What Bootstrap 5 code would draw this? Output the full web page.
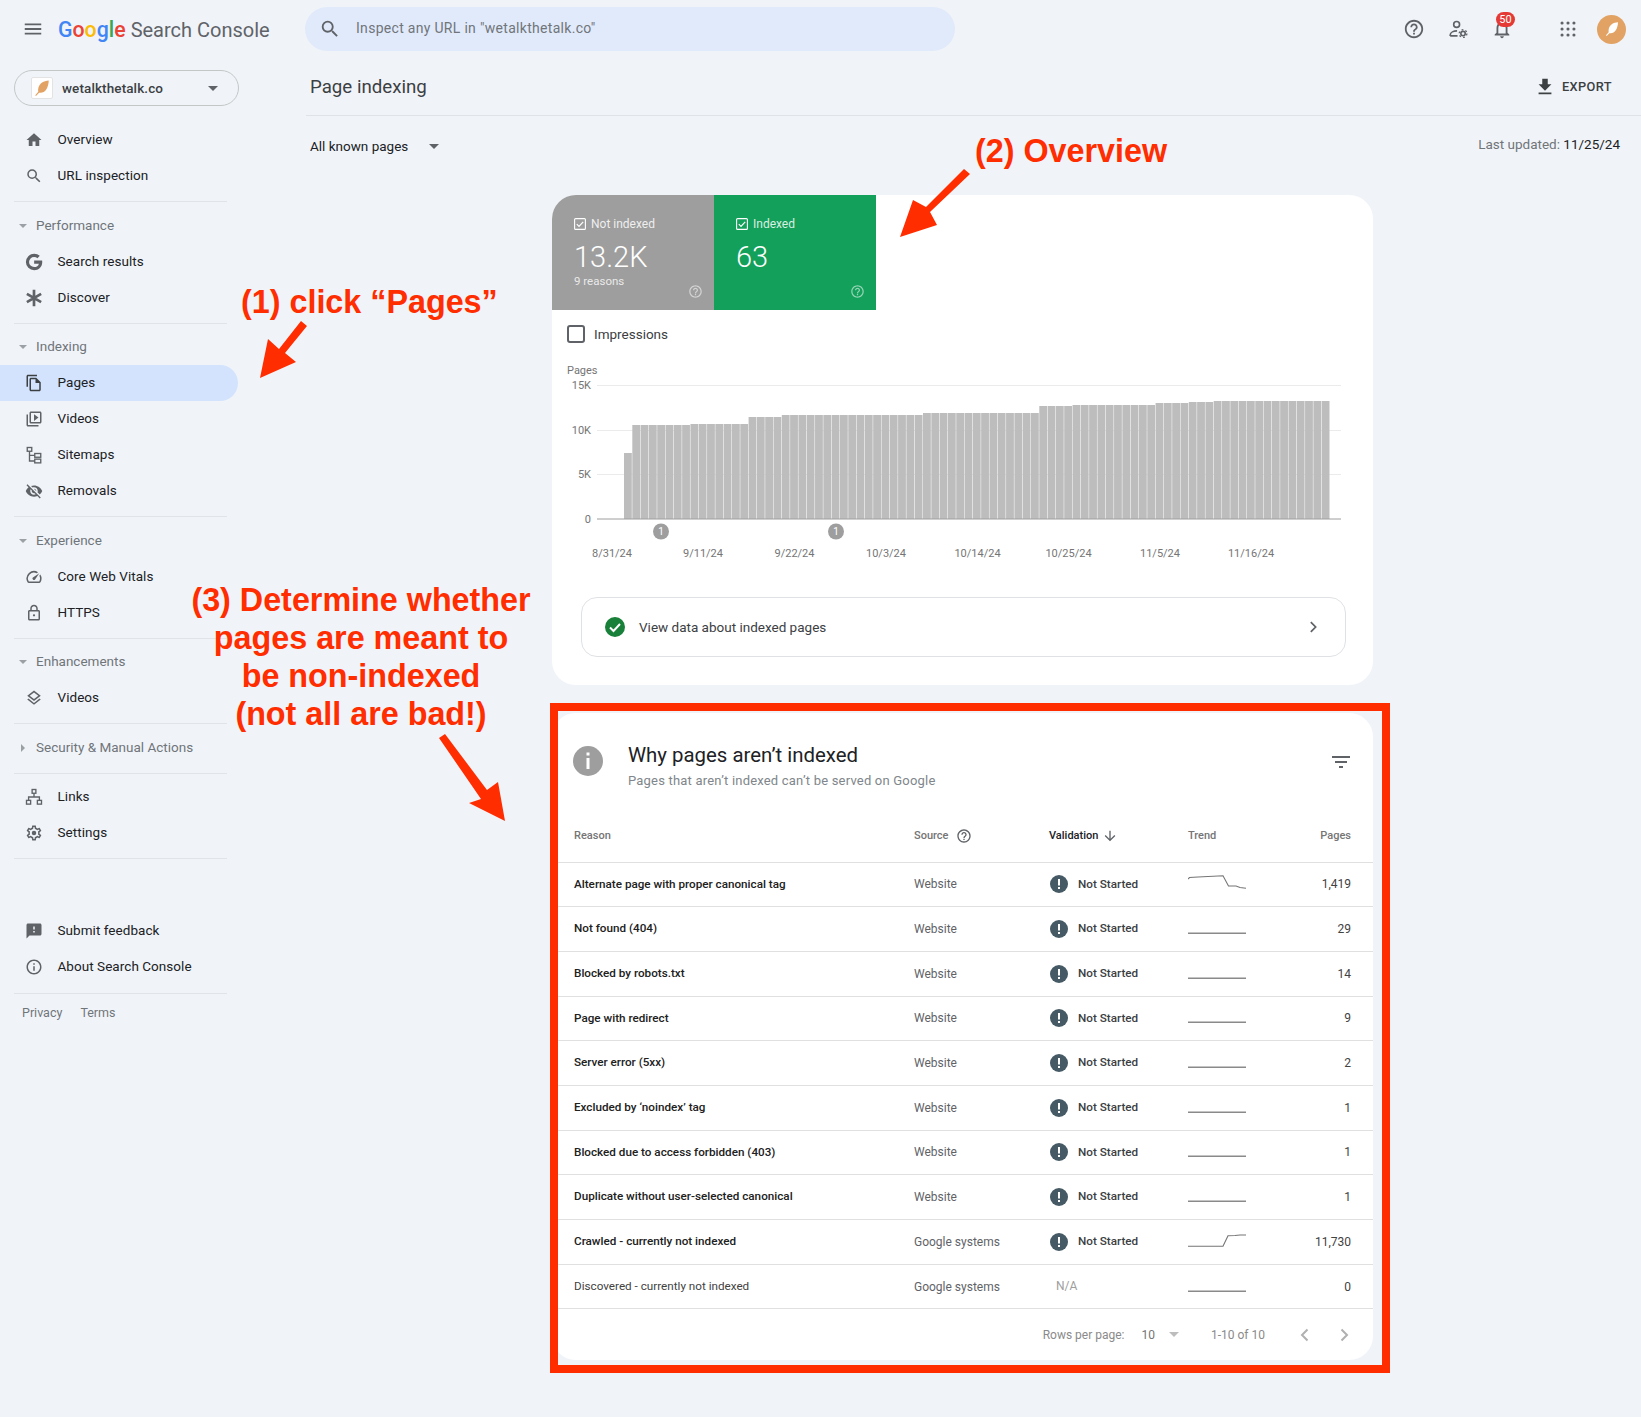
<!DOCTYPE html>
<html lang="en">
<head>
    <meta charset="UTF-8" />
    <meta name="viewport" content="width=device-width, initial-scale=1" />
    <title>Page indexing - Search Console</title>
    <link href="https://cdn.jsdelivr.net/npm/bootstrap@5.3.0/dist/css/bootstrap.min.css" rel="stylesheet" />
    <style>
    body {
        position: relative;
        min-height: 1417px;
        background: #f0f4f9;
        font-family: Roboto, "Liberation Sans", sans-serif;
        color: #202124;
    }
    svg { display: block; flex: none; }

    /* top bar */
    .gsc-top { height: 58px; padding-left: 22px; padding-right: 15px; }
    .gsc-menu { width: 22px; height: 22px; fill: #5f6368; }
    .gsc-logo { flex: none; width: 261px; padding-left: 14px; font-size: 20px; line-height: 30px; color: #5f6368; white-space: nowrap; margin-top: 2px; }
    .gsc-logo b { font-weight: 500; font-size: 21.3px; margin-right: 5px; }
    .gsc-search { flex: none; width: 650px; height: 44px; margin-top: -1px; padding-left: 14px; border-radius: 22px; background: #e1eafa; color: #70757a; font-size: 14px; letter-spacing: .3px; }
    .gsc-search svg { width: 22px; height: 22px; fill: #5f6368; margin-right: 15px; }
    .gsc-tool svg { width: 22px; height: 22px; margin: 1px; fill: #5f6368; }
    .gsc-tool { width: 24px; height: 24px; margin-left: 20px; position: relative; }
    .gsc-tool-apps { margin-left: 42px; }
    .gsc-badge { position: absolute; left: 6px; top: -5px; width: 19px; height: 15px; border-radius: 8px; background: #e53935; color: #fff; font-size: 11px; line-height: 15px; text-align: center; }
    .gsc-avatar { width: 29px; height: 29px; margin-left: 17px; border-radius: 50%; background: #e2a263; }

    /* side nav */
    .gsc-side { width: 306px; flex: none; }
    .gsc-prop { width: 225px; height: 36px; margin: 12px 0 15.5px 14px; padding: 0 20px 0 16px; border: 1px solid #c4c7c5; border-radius: 18px; font-size: 13.5px; font-weight: 500; letter-spacing: .1px; color: #3c4043; }
    .gsc-fav { width: 22px; height: 22px; margin-right: 9px; background: #fff; border: 1px solid #e3e3e3; border-radius: 2px; }
    .gsc-item { width: 238px; height: 36px; padding-left: 25px; font-size: 13.5px; letter-spacing: .05px; color: #202124; border-radius: 0 18px 18px 0; text-decoration: none; }
    .gsc-item svg { width: 18px; height: 18px; margin-right: 14.5px; fill: #5f6368; }
    .gsc-item.gsc-on { background: #d3e3fd; }
    .gsc-head { height: 36px; padding-left: 19px; font-size: 13.5px; color: #70757a; }
    .gsc-head svg { width: 8px; height: 8px; margin-right: 9px; fill: #9aa0a6; }
    .gsc-sep { width: 213px; height: 1px; margin: 7px 0 5px 14px; background: #e0e3e7; }
    .gsc-sep-first { margin-bottom: 6px; }
    .gsc-sep-gap { margin-bottom: 54px; }
    .gsc-sep-last { margin-top: 8px; margin-bottom: 0; }
    .gsc-foot { padding: 9.5px 0 0 22px; font-size: 12.5px; line-height: 20px; color: #70757a; gap: 18px; }

    /* main column */
    .gsc-main { flex: 1 1 0; min-width: 0; }
    .gsc-title { height: 58px; padding: 2px 29px 0 4px; border-bottom: 1px solid #dfe2e6; }
    .gsc-title h1 { margin: 0; font-size: 18.7px; font-weight: 400; color: #3c4043; }
    .gsc-export { font-size: 12.8px; font-weight: 500; letter-spacing: .4px; color: #3c4043; margin-top: -2px; }
    .gsc-export svg { width: 22px; height: 22px; margin-right: 6px; fill: #3c4043; }
    .gsc-filter { height: 79px; padding: 20px 21px 0 4px; font-size: 13.5px; line-height: 20px; }
    .gsc-filter svg { width: 10px; height: 5px; margin-left: 21px; fill: #5f6368; }
    .gsc-updated { margin-top: -2px; color: #70757a; }
    .gsc-updated span { color: #202124; }

    .gsc-panel.card { width: 821px; margin-left: 246px; border: 0; border-radius: 24px; overflow: hidden; background: #fff; }
    .gsc-panel-low.card { margin-top: 28px; margin-bottom: 57px; }
    .gsc-tile { width: 162px; height: 115px; position: relative; padding: 21px 0 0 22px; color: #fff; }
    .gsc-tile-grey { background: #9e9e9e; }
    .gsc-tile-green { background: #12a05a; }
    .gsc-tile-label { font-size: 12px; line-height: 16px; color: rgba(255, 255, 255, .85); }
    .gsc-tick { width: 12px; height: 12px; margin-right: 5px; }
    .gsc-tile-num { font-size: 29px; font-weight: 300; line-height: 36px; margin-top: 7px; }
    .gsc-tile-sub { font-size: 11.5px; line-height: 16px; margin-top: -2px; color: rgba(255, 255, 255, .8); }
    .gsc-tile svg.gsc-tile-help { position: absolute; right: 11px; bottom: 11px; width: 15px; height: 15px; fill: rgba(255, 255, 255, .55); }
    .gsc-imp { margin: 15px 0 12px 15px; height: 18px; font-size: 13.5px; color: #3c4043; }
    .gsc-box { width: 18px; height: 18px; margin-right: 9px; border: 2px solid #5f6368; border-radius: 3px; }
    .gsc-chart { width: 821px; height: 215px; }
    .gsc-chart text { font-family: Roboto, "Liberation Sans", sans-serif; font-size: 11px; fill: #757575; }
    .gsc-chart text.gsc-pin { font-size: 10px; fill: #fff; }
    .gsc-view { height: 60px; margin: 27px 27px 28px 29px; padding: 0 25px 0 23px; border: 1px solid #dfe1e5; border-radius: 16px; font-size: 13.5px; color: #3c4043; }
    .gsc-view svg.gsc-ok { width: 20px; height: 20px; margin-right: 14px; }
    .gsc-view svg.gsc-chev { width: 14px; height: 14px; margin-left: auto; fill: none; stroke: #5f6368; stroke-width: 2; }

    .gsc-why { height: 95px; padding: 29px 20px 0 21px; }
    .gsc-dot { width: 30px; height: 30px; margin: 4px 25px 0 0; }
    .gsc-why h2 { margin: 0; font-size: 20.4px; font-weight: 400; line-height: 26px; color: #202124; }
    .gsc-why p { margin: 4px 0 0; font-size: 13px; line-height: 18px; letter-spacing: .2px; color: #80868b; }
    .gsc-why svg.gsc-funnel { width: 24px; height: 24px; margin: 8px 0 0 auto; fill: #5f6368; }

    .gsc-table.table { table-layout: fixed; width: 821px; margin: 0; --bs-table-bg: transparent; }
    .gsc-table th, .gsc-table td { padding: 0; border-bottom: 1px solid #e0e0e0; vertical-align: middle; font-size: 12px; white-space: nowrap; }
    .gsc-table th { height: 54px; padding-top: 3px; font-size: 11px; font-weight: 500; color: #757575; }
    .gsc-table td { height: 44.7px; color: #5f6368; }
    .gsc-table td.gsc-c1 { padding-left: 22px; font-size: 11.7px; font-weight: 500; color: #212121; }
    .gsc-table th.gsc-c1 { padding-left: 22px; }
    .gsc-table .gsc-c5 { padding-right: 22px; text-align: right; color: #424242; }
    .gsc-table th.gsc-c5 { color: #757575; }
    .gsc-table td.gsc-c1-plain { font-weight: 400; color: #424242; }
    .gsc-table th.gsc-sorted { color: #202124; }
    .gsc-th-icon { width: 16px; height: 16px; margin-left: 8px; fill: #5f6368; }
    .gsc-sorted .gsc-th-icon { margin-left: 4px; }
    .gsc-state { padding-left: 1px; font-size: 11.7px; font-weight: 500; color: #3c4043; }
    .gsc-state svg { width: 18px; height: 18px; margin-right: 10px; }
    .gsc-na { padding-left: 7px; margin-top: -2px; color: #9e9e9e; }
    .gsc-spark { width: 58px; height: 20px; fill: none; stroke: #757575; stroke-width: 1.1; }
    .gsc-spark-flat { stroke: #8a8a8a; stroke-width: 1.6; }
    .gsc-pager { height: 51px; padding-right: 21px; font-size: 12px; color: #8a8a8a; }
    .gsc-pager .gsc-ten { margin-left: 17px; color: #757575; }
    .gsc-pager svg.gsc-caret { width: 10px; height: 5px; margin-left: 14px; fill: #bdbdbd; }
    .gsc-pager .gsc-count { margin-left: 32px; margin-right: 32px; }
    .gsc-pager svg.gsc-arrow { width: 16px; height: 16px; fill: none; stroke: #b0b0b0; stroke-width: 2; }
    .gsc-pager svg.gsc-arrow + svg.gsc-arrow { margin-left: 23px; }

    /* red notes drawn over the screenshot */
    .gsc-note { position: absolute; font-family: "Liberation Sans", Arial, sans-serif; font-weight: 700; font-size: 32.3px; line-height: 38px; color: #ff2d00; white-space: nowrap; }
    .gsc-note-one { left: 241px; top: 283px; }
    .gsc-note-two { left: 975px; top: 132px; }
    .gsc-note-three { left: 161px; top: 580.5px; width: 400px; text-align: center; }
    .gsc-redbox { position: absolute; left: 550px; top: 703px; width: 840px; height: 670px; border: 8px solid #ff2d00; }
    .gsc-arrows { position: absolute; left: 0; top: 0; width: 1641px; height: 1000px; pointer-events: none; }
    </style>
</head>
<body>
<svg width="0" height="0" class="position-absolute">
    <defs>
        <symbol id="i-search" viewBox="0 0 24 24"><path d="M15.5 14h-.79l-.28-.27A6.471 6.471 0 0 0 16 9.5 6.5 6.5 0 1 0 9.5 16c1.61 0 3.09-.59 4.23-1.57l.27.28v.79l5 4.99L20.49 19l-4.99-5zm-6 0C7.01 14 5 11.99 5 9.5S7.01 5 9.5 5 14 7.01 14 9.5 11.99 14 9.5 14z"/></symbol>
        <symbol id="i-help" viewBox="0 0 24 24"><path d="M11 18h2v-2h-2v2zm1-16C6.48 2 2 6.48 2 12s4.48 10 10 10 10-4.48 10-10S17.52 2 12 2zm0 18c-4.41 0-8-3.59-8-8s3.59-8 8-8 8 3.59 8 8-3.59 8-8 8zm0-14c-2.21 0-4 1.79-4 4h2c0-1.1.9-2 2-2s2 .9 2 2c0 2-3 1.75-3 5h2c0-2.25 3-2.5 3-5 0-2.21-1.79-4-4-4z"/></symbol>
        <symbol id="i-down" viewBox="0 0 8 8"><path d="M0 2h8L4 6z"/></symbol>
        <symbol id="i-right" viewBox="0 0 8 8"><path d="M2 0v8l4-4z"/></symbol>
        <symbol id="i-caret" viewBox="0 0 10 5"><path d="M0 0h10L5 5z"/></symbol>
        <symbol id="i-tick" viewBox="0 0 12 12"><rect x=".6" y=".6" width="10.8" height="10.8" rx="1" fill="none" stroke="#fff" stroke-width="1.1"/><path d="M2.8 6.2l2.2 2.2 4.2-4.6" fill="none" stroke="#fff" stroke-width="1.2"/></symbol>
        <symbol id="i-alert" viewBox="0 0 18 18"><circle cx="9" cy="9" r="9" fill="#455a64"/><rect x="8" y="4" width="2" height="6.5" fill="#fff"/><rect x="8" y="12" width="2" height="2" fill="#fff"/></symbol>
        <symbol id="i-flat" viewBox="0 0 58 20"><path d="M0 14.3h58"/></symbol>
        <symbol id="i-feather" viewBox="0 0 24 24"><path d="M21 2c-7 .5-12 3.5-13.800 9.800-.5 1.900-.5 3.700-.2 5.200L3 21.500 4 22.500l4.100-4.300C15.500 19.500 20.500 13 21 2z"/></symbol>
    </defs>
</svg>

<header class="gsc-top d-flex align-items-center">
    <svg class="gsc-menu" viewBox="0 0 24 24"><path d="M3 18h18v-2H3v2zm0-5h18v-2H3v2zm0-7v2h18V6H3z"/></svg>
    <div class="gsc-logo"><b><span style="color:#4285f4">G</span><span style="color:#ea4335">o</span><span style="color:#fbbc05">o</span><span style="color:#4285f4">g</span><span style="color:#34a853">l</span><span style="color:#ea4335">e</span></b>Search Console</div>
    <div class="gsc-search d-flex align-items-center">
        <svg><use href="#i-search"/></svg>
        <span>Inspect any URL in "wetalkthetalk.co"</span>
    </div>
    <div class="d-flex align-items-center ms-auto">
        <div class="gsc-tool"><svg><use href="#i-help"/></svg></div>
        <div class="gsc-tool">
            <svg viewBox="0 0 24 24">
                <circle cx="10.5" cy="7" r="3.2" fill="none" stroke="#5f6368" stroke-width="1.8"/>
                <path d="M3.5 19.5v-1c0-3 4-4.500 7.500-4.500M3.5 19.5h8" fill="none" stroke="#5f6368" stroke-width="1.8"/>
                <circle cx="17.5" cy="17" r="2.4" fill="none" stroke="#5f6368" stroke-width="1.8"/>
                <circle cx="17.5" cy="17" r="4.2" fill="none" stroke="#5f6368" stroke-width="1.4" stroke-dasharray="2 2.4"/>
            </svg>
        </div>
        <div class="gsc-tool">
            <svg viewBox="0 0 24 24"><path d="M12 22c1.1 0 2-.9 2-2h-4c0 1.1.9 2 2 2zm6-6v-5c0-3.07-1.63-5.64-4.5-6.32V4c0-.83-.67-1.500-1.500-1.500s-1.500.67-1.500 1.500v.68C7.640 5.360 6 7.920 6 11v5l-2 2v1h16v-1l-2-2zm-2 1H8v-6c0-2.480 1.510-4.500 4-4.500s4 2.020 4 4.500v6z"/></svg>
            <span class="gsc-badge">50</span>
        </div>
        <div class="gsc-tool gsc-tool-apps">
            <svg viewBox="0 0 24 24">
                <circle cx="5.5" cy="5.5" r="1.7"/><circle cx="12" cy="5.5" r="1.7"/><circle cx="18.5" cy="5.5" r="1.7"/>
                <circle cx="5.5" cy="12" r="1.7"/><circle cx="12" cy="12" r="1.7"/><circle cx="18.5" cy="12" r="1.7"/>
                <circle cx="5.5" cy="18.5" r="1.7"/><circle cx="12" cy="18.5" r="1.7"/><circle cx="18.5" cy="18.5" r="1.7"/>
            </svg>
        </div>
        <div class="gsc-avatar d-flex align-items-center justify-content-center">
            <svg width="16" height="16" fill="#fff"><use href="#i-feather"/></svg>
        </div>
    </div>
</header>

<div class="d-flex">
    <nav class="gsc-side">
        <div class="gsc-prop d-flex align-items-center">
            <span class="gsc-fav d-flex align-items-center justify-content-center"><svg width="18" height="18" fill="#e2a263"><use href="#i-feather"/></svg></span>
            <span>wetalkthetalk.co</span>
            <svg class="ms-auto" width="10" height="5" fill="#5f6368"><use href="#i-caret"/></svg>
        </div>

        <a class="gsc-item d-flex align-items-center"><svg viewBox="0 0 24 24"><path d="M10 20v-6h4v6h5v-8h3L12 3 2 12h3v8z"/></svg>Overview</a>
        <a class="gsc-item d-flex align-items-center"><svg><use href="#i-search"/></svg>URL inspection</a>
        <div class="gsc-sep gsc-sep-first"></div>

        <div class="gsc-head d-flex align-items-center"><svg><use href="#i-down"/></svg>Performance</div>
        <a class="gsc-item d-flex align-items-center"><svg viewBox="0 0 24 24"><path d="M12.2 10v4.200h6.300c-.6 2.900-3 4.600-6.300 4.600a6.800 6.800 0 1 1 0-13.600c1.700 0 3.200.6 4.400 1.700l3.100-3.100A11.100 11.100 0 0 0 12.200 1a11 11 0 1 0 0 22c6 0 10.800-4.200 10.800-11 0-.7-.1-1.400-.2-2z"/></svg>Search results</a>
        <a class="gsc-item d-flex align-items-center"><svg viewBox="0 0 24 24"><path d="M12 1v22M2.500 6.500l19 11M2.500 17.500l19-11" fill="none" stroke="#5f6368" stroke-width="3.6"/></svg>Discover</a>
        <div class="gsc-sep"></div>

        <div class="gsc-head d-flex align-items-center"><svg><use href="#i-down"/></svg>Indexing</div>
        <a class="gsc-item gsc-on d-flex align-items-center"><svg viewBox="0 0 24 24"><path fill="#3c4043" d="M16 1H4c-1.100 0-2 .9-2 2v14h2V3h12V1zm-1 4H8c-1.100 0-1.990.9-1.990 2L6 21c0 1.100.89 2 1.990 2H19c1.100 0 2-.9 2-2V11l-6-6zM8 21V7h6v5h5v9H8z"/></svg>Pages</a>
        <a class="gsc-item d-flex align-items-center"><svg viewBox="0 0 24 24"><path d="M4 6H2v14c0 1.100.9 2 2 2h14v-2H4V6zm16-4H8c-1.100 0-2 .9-2 2v12c0 1.100.9 2 2 2h12c1.100 0 2-.9 2-2V4c0-1.100-.9-2-2-2zm0 14H8V4h12v12zM12 5.500v9l6-4.500z"/></svg>Videos</a>
        <a class="gsc-item d-flex align-items-center"><svg viewBox="0 0 24 24"><g fill="none" stroke="#5f6368" stroke-width="1.8"><rect x="3" y="2" width="6" height="5"/><rect x="13" y="10" width="8" height="5"/><rect x="13" y="17.5" width="8" height="5"/><path d="M6 7v13h7M6 12.500h7"/></g></svg>Sitemaps</a>
        <a class="gsc-item d-flex align-items-center"><svg viewBox="0 0 24 24"><path d="M12 7c2.760 0 5 2.240 5 5 0 .65-.13 1.260-.36 1.830l2.920 2.920c1.510-1.260 2.700-2.890 3.430-4.750-1.730-4.390-6-7.500-11-7.500-1.400 0-2.740.25-3.980.7l2.160 2.160C10.740 7.130 11.350 7 12 7zM2 4.270l2.280 2.280.46.46C3.080 8.300 1.780 10.020 1 12c1.730 4.390 6 7.500 11 7.500 1.550 0 3.030-.3 4.380-.84l.42.42L19.730 22 21 20.730 3.270 3 2 4.270zM7.530 9.800l1.550 1.550c-.05.21-.08.43-.08.65 0 1.660 1.340 3 3 3 .22 0 .44-.03.65-.08l1.550 1.550c-.67.33-1.410.53-2.200.53-2.760 0-5-2.240-5-5 0-.79.2-1.530.53-2.200zm4.310-.78l3.150 3.150.02-.16c0-1.660-1.340-3-3-3l-.17.01z"/></svg>Removals</a>
        <div class="gsc-sep gsc-sep-first"></div>

        <div class="gsc-head d-flex align-items-center"><svg><use href="#i-down"/></svg>Experience</div>
        <a class="gsc-item d-flex align-items-center"><svg viewBox="0 0 24 24"><path d="M20.380 8.570l-1.230 1.850a8 8 0 0 1-.22 7.580H5.070A8 8 0 0 1 15.580 6.850l1.850-1.230A10 10 0 0 0 3.350 19a2 2 0 0 0 1.720 1h13.850a2 2 0 0 0 1.740-1 10 10 0 0 0-.27-10.440zm-9.790 6.840a2 2 0 0 0 2.830 0l5.660-8.490-8.490 5.660a2 2 0 0 0 0 2.830z"/></svg>Core Web Vitals</a>
        <a class="gsc-item d-flex align-items-center"><svg viewBox="0 0 24 24"><path d="M18 8h-1V6c0-2.760-2.240-5-5-5S7 3.240 7 6v2H6c-1.100 0-2 .9-2 2v10c0 1.100.9 2 2 2h12c1.100 0 2-.9 2-2V10c0-1.100-.9-2-2-2zM9 6c0-1.660 1.340-3 3-3s3 1.340 3 3v2H9V6zm9 14H6V10h12v10zm-6-3.500a1.500 1.500 0 1 0 0-3 1.500 1.500 0 0 0 0 3z"/></svg>HTTPS</a>
        <div class="gsc-sep"></div>

        <div class="gsc-head d-flex align-items-center"><svg><use href="#i-down"/></svg>Enhancements</div>
        <a class="gsc-item d-flex align-items-center"><svg viewBox="0 0 24 24"><path d="M11.990 18.540l-7.370-5.730L3 14.070l9 7 9-7-1.630-1.270-7.380 5.740zM12 16l7.360-5.730L21 9l-9-7-9 7 1.630 1.270L12 16zm0-11.470L17.740 9 12 13.470 6.260 9 12 4.530z"/></svg>Videos</a>
        <div class="gsc-sep gsc-sep-first"></div>

        <div class="gsc-head d-flex align-items-center"><svg><use href="#i-right"/></svg>Security &amp; Manual Actions</div>
        <div class="gsc-sep"></div>

        <a class="gsc-item d-flex align-items-center"><svg viewBox="0 0 24 24"><g fill="none" stroke="#5f6368" stroke-width="1.8"><rect x="9.5" y="2" width="5" height="5"/><rect x="2" y="16.5" width="5.5" height="5"/><rect x="16.5" y="16.5" width="5.5" height="5"/><path d="M12 7v5M4.800 16.500V12h14.400v4.500"/></g></svg>Links</a>
        <a class="gsc-item d-flex align-items-center"><svg viewBox="0 0 24 24"><path d="M19.430 12.980c.04-.32.07-.64.07-.98 0-.34-.03-.66-.07-.98l2.110-1.650c.19-.15.24-.42.12-.64l-2-3.460c-.09-.16-.26-.25-.44-.25-.06 0-.12.01-.17.03l-2.490 1c-.52-.4-1.080-.73-1.690-.98l-.38-2.650C14.460 2.180 14.250 2 14 2h-4c-.25 0-.46.18-.49.42l-.38 2.650c-.61.25-1.170.59-1.690.98l-2.490-1c-.06-.02-.12-.03-.18-.03-.17 0-.34.09-.43.25l-2 3.460c-.13.22-.07.49.12.64l2.110 1.650c-.04.32-.07.65-.07.98 0 .33.03.66.07.98l-2.110 1.650c-.19.15-.24.42-.12.64l2 3.460c.09.16.26.25.44.25.06 0 .12-.01.17-.03l2.490-1c.52.4 1.080.73 1.690.98l.38 2.650c.03.24.24.42.49.42h4c.25 0 .46-.18.49-.42l.38-2.650c.61-.25 1.170-.59 1.690-.98l2.490 1c.06.02.12.03.18.03.17 0 .34-.09.43-.25l2-3.460c.12-.22.07-.49-.12-.64l-2.110-1.650zm-1.980-1.710c.04.31.05.52.05.73 0 .21-.02.43-.05.73l-.14 1.130.89.7 1.080.84-.7 1.210-1.270-.51-1.040-.42-.9.68c-.43.32-.84.56-1.250.73l-1.060.43-.16 1.130-.2 1.350h-1.400l-.19-1.350-.16-1.130-1.060-.43c-.43-.18-.83-.41-1.230-.71l-.91-.7-1.060.43-1.270.51-.7-1.210 1.080-.84.89-.7-.14-1.130c-.03-.31-.05-.54-.05-.74s.02-.43.05-.73l.14-1.130-.89-.7-1.080-.84.7-1.210 1.270.51 1.040.42.9-.68c.43-.32.84-.56 1.250-.73l1.060-.43.16-1.130.2-1.350h1.390l.19 1.350.16 1.130 1.060.43c.43.18.83.41 1.230.71l.91.7 1.060-.43 1.270-.51.7 1.210-1.070.85-.89.7.14 1.130zM12 9a3 3 0 1 0 0 6 3 3 0 0 0 0-6z"/></svg>Settings</a>
        <div class="gsc-sep gsc-sep-gap"></div>

        <a class="gsc-item d-flex align-items-center"><svg viewBox="0 0 24 24"><path d="M20 2H4c-1.100 0-1.990.9-1.990 2L2 22l4-4h14c1.100 0 2-.9 2-2V4c0-1.100-.9-2-2-2zm-7 12h-2v-2h2v2zm0-4h-2V6h2v4z"/></svg>Submit feedback</a>
        <a class="gsc-item d-flex align-items-center"><svg viewBox="0 0 24 24"><path d="M11 7h2v2h-2zm0 4h2v6h-2zm1-9C6.480 2 2 6.480 2 12s4.480 10 10 10 10-4.480 10-10S17.520 2 12 2zm0 18c-4.410 0-8-3.590-8-8s3.590-8 8-8 8 3.590 8 8-3.590 8-8 8z"/></svg>About Search Console</a>
        <div class="gsc-sep gsc-sep-last"></div>
        <div class="gsc-foot d-flex"><span>Privacy</span><span>Terms</span></div>
    </nav>

    <main class="gsc-main">
        <div class="gsc-title d-flex align-items-center justify-content-between">
            <h1>Page indexing</h1>
            <div class="gsc-export d-flex align-items-center">
                <svg viewBox="0 0 24 24"><path d="M19 9h-4V3H9v6H5l7 7 7-7zM5 18v2h14v-2H5z"/></svg>EXPORT
            </div>
        </div>
        <div class="gsc-filter d-flex justify-content-between">
            <div class="d-flex align-items-start"><span>All known pages</span><svg class="mt-2"><use href="#i-caret"/></svg></div>
            <div class="gsc-updated">Last updated: <span>11/25/24</span></div>
        </div>

        <section class="gsc-panel card">
            <div class="d-flex">
                <div class="gsc-tile gsc-tile-grey">
                    <div class="gsc-tile-label d-flex align-items-center"><svg class="gsc-tick"><use href="#i-tick"/></svg>Not indexed</div>
                    <div class="gsc-tile-num">13.2K</div>
                    <div class="gsc-tile-sub">9 reasons</div>
                    <svg class="gsc-tile-help"><use href="#i-help"/></svg>
                </div>
                <div class="gsc-tile gsc-tile-green">
                    <div class="gsc-tile-label d-flex align-items-center"><svg class="gsc-tick"><use href="#i-tick"/></svg>Indexed</div>
                    <div class="gsc-tile-num">63</div>
                    <svg class="gsc-tile-help"><use href="#i-help"/></svg>
                </div>
            </div>
            <div class="gsc-imp d-flex align-items-center"><span class="gsc-box"></span>Impressions</div>
            <svg class="gsc-chart" viewBox="552 355 821 215">
                <text x="567" y="374">Pages</text>
                <path d="M597 385.5h744M597 430.5h744M597 474.5h744" stroke="#ebebeb" fill="none"/>
                <text x="591" y="389" text-anchor="end">15K</text>
                <text x="591" y="434" text-anchor="end">10K</text>
                <text x="591" y="478" text-anchor="end">5K</text>
                <text x="591" y="523" text-anchor="end">0</text>
                <g id="chartBars"></g>
                <path d="M597 519h744" stroke="#9e9e9e" fill="none"/>
                <circle cx="661" cy="531.5" r="8" fill="#9e9e9e"/>
                <circle cx="836" cy="531.5" r="8" fill="#9e9e9e"/>
                <text class="gsc-pin" x="661" y="535" text-anchor="middle">1</text>
                <text class="gsc-pin" x="836" y="535" text-anchor="middle">1</text>
                <text x="612" y="557" text-anchor="middle">8/31/24</text>
                <text x="703" y="557" text-anchor="middle">9/11/24</text>
                <text x="794.5" y="557" text-anchor="middle">9/22/24</text>
                <text x="886" y="557" text-anchor="middle">10/3/24</text>
                <text x="977.5" y="557" text-anchor="middle">10/14/24</text>
                <text x="1068.5" y="557" text-anchor="middle">10/25/24</text>
                <text x="1160" y="557" text-anchor="middle">11/5/24</text>
                <text x="1251" y="557" text-anchor="middle">11/16/24</text>
            </svg>
            <div class="gsc-view d-flex align-items-center">
                <svg class="gsc-ok" viewBox="0 0 20 20"><circle cx="10" cy="10" r="10" fill="#188038"/><path d="M5 10.500l3.500 3.500L15 7" fill="none" stroke="#fff" stroke-width="2"/></svg>
                <span>View data about indexed pages</span>
                <svg class="gsc-chev" viewBox="0 0 16 16"><path d="M5.500 2.500L11 8l-5.500 5.500"/></svg>
            </div>
        </section>

        <section class="gsc-panel gsc-panel-low card">
            <div class="gsc-why d-flex align-items-start">
                <svg class="gsc-dot" viewBox="0 0 30 30"><circle cx="15" cy="15" r="15" fill="#9e9e9e"/><rect x="13.5" y="6.5" width="3" height="3" fill="#fff"/><rect x="13.5" y="12" width="3" height="11" fill="#fff"/></svg>
                <div>
                    <h2>Why pages aren’t indexed</h2>
                    <p>Pages that aren’t indexed can’t be served on Google</p>
                </div>
                <svg class="gsc-funnel" viewBox="0 0 24 24"><path d="M10 18h4v-2h-4v2zM3 6v2h18V6H3zm3 7h12v-2H6v2z"/></svg>
            </div>
            <table class="gsc-table table">
                <colgroup><col style="width:362px"><col style="width:135px"><col style="width:139px"><col style="width:100px"><col style="width:85px"></colgroup>
                <thead>
                    <tr>
                        <th class="gsc-c1">Reason</th>
                        <th><div class="d-flex align-items-center">Source<svg class="gsc-th-icon"><use href="#i-help"/></svg></div></th>
                        <th class="gsc-sorted"><div class="d-flex align-items-center">Validation<svg class="gsc-th-icon" viewBox="0 0 24 24"><path d="M20 12l-1.410-1.410L13 16.170V4h-2v12.170l-5.580-5.590L4 12l8 8 8-8z"/></svg></div></th>
                        <th>Trend</th>
                        <th class="gsc-c5">Pages</th>
                    </tr>
                </thead>
                <tbody>
                    <tr><td class="gsc-c1">Alternate page with proper canonical tag</td><td>Website</td><td><div class="gsc-state d-flex align-items-center"><svg><use href="#i-alert"/></svg>Not Started</div></td><td><svg class="gsc-spark" viewBox="0 0 58 20"><path d="M0 5L1.5 3.5 10 3 35 1.7 40.5 12H48L52 13.5 58 14.3"/></svg></td><td class="gsc-c5">1,419</td></tr>
                    <tr><td class="gsc-c1">Not found (404)</td><td>Website</td><td><div class="gsc-state d-flex align-items-center"><svg><use href="#i-alert"/></svg>Not Started</div></td><td><svg class="gsc-spark gsc-spark-flat"><use href="#i-flat"/></svg></td><td class="gsc-c5">29</td></tr>
                    <tr><td class="gsc-c1">Blocked by robots.txt</td><td>Website</td><td><div class="gsc-state d-flex align-items-center"><svg><use href="#i-alert"/></svg>Not Started</div></td><td><svg class="gsc-spark gsc-spark-flat"><use href="#i-flat"/></svg></td><td class="gsc-c5">14</td></tr>
                    <tr><td class="gsc-c1">Page with redirect</td><td>Website</td><td><div class="gsc-state d-flex align-items-center"><svg><use href="#i-alert"/></svg>Not Started</div></td><td><svg class="gsc-spark gsc-spark-flat"><use href="#i-flat"/></svg></td><td class="gsc-c5">9</td></tr>
                    <tr><td class="gsc-c1">Server error (5xx)</td><td>Website</td><td><div class="gsc-state d-flex align-items-center"><svg><use href="#i-alert"/></svg>Not Started</div></td><td><svg class="gsc-spark gsc-spark-flat"><use href="#i-flat"/></svg></td><td class="gsc-c5">2</td></tr>
                    <tr><td class="gsc-c1">Excluded by ‘noindex’ tag</td><td>Website</td><td><div class="gsc-state d-flex align-items-center"><svg><use href="#i-alert"/></svg>Not Started</div></td><td><svg class="gsc-spark gsc-spark-flat"><use href="#i-flat"/></svg></td><td class="gsc-c5">1</td></tr>
                    <tr><td class="gsc-c1">Blocked due to access forbidden (403)</td><td>Website</td><td><div class="gsc-state d-flex align-items-center"><svg><use href="#i-alert"/></svg>Not Started</div></td><td><svg class="gsc-spark gsc-spark-flat"><use href="#i-flat"/></svg></td><td class="gsc-c5">1</td></tr>
                    <tr><td class="gsc-c1">Duplicate without user-selected canonical</td><td>Website</td><td><div class="gsc-state d-flex align-items-center"><svg><use href="#i-alert"/></svg>Not Started</div></td><td><svg class="gsc-spark gsc-spark-flat"><use href="#i-flat"/></svg></td><td class="gsc-c5">1</td></tr>
                    <tr><td class="gsc-c1">Crawled - currently not indexed</td><td>Google systems</td><td><div class="gsc-state d-flex align-items-center"><svg><use href="#i-alert"/></svg>Not Started</div></td><td><svg class="gsc-spark" viewBox="0 0 58 20"><path d="M0 14.3H35L40 3.8 47 3.5 52 3H58"/></svg></td><td class="gsc-c5">11,730</td></tr>
                    <tr><td class="gsc-c1 gsc-c1-plain">Discovered - currently not indexed</td><td>Google systems</td><td><div class="gsc-na">N/A</div></td><td><svg class="gsc-spark gsc-spark-flat"><use href="#i-flat"/></svg></td><td class="gsc-c5">0</td></tr>
                </tbody>
            </table>
            <div class="gsc-pager d-flex align-items-center justify-content-end">
                <span>Rows per page:</span>
                <span class="gsc-ten">10</span>
                <svg class="gsc-caret"><use href="#i-caret"/></svg>
                <span class="gsc-count">1-10 of 10</span>
                <svg class="gsc-arrow" viewBox="0 0 16 16"><path d="M10.500 2.500L5 8l5.500 5.500"/></svg>
                <svg class="gsc-arrow" viewBox="0 0 16 16"><path d="M5.500 2.500L11 8l-5.500 5.500"/></svg>
            </div>
        </section>
    </main>
</div>

<!-- red notes -->
<div class="gsc-redbox"></div>
<div class="gsc-note gsc-note-one">(1) click “Pages”</div>
<div class="gsc-note gsc-note-two">(2) Overview</div>
<div class="gsc-note gsc-note-three">(3) Determine whether<br>pages are meant to<br>be non-indexed<br>(not all are bad!)</div>
<svg class="gsc-arrows" viewBox="0 0 1641 1000" fill="#ff2d00">
    <path d="M307 326L301 321 279 349 268 339 260 378 296 362 285 353z"/>
    <path d="M970 174L964 169 926 207 913 200 900 237 937 225 930 212z"/>
    <path d="M445 734L439 738 481 799 469 803 505 821 498 782 487 790z"/>
</svg>

<script src="https://cdn.jsdelivr.net/npm/bootstrap@5.3.0/dist/js/bootstrap.bundle.min.js"></script>
<script>
    // bars of the pages chart: [x where the step ends, y of the bar top]
    const steps = [[632, 453], [690, 425], [748, 424], [782, 417], [923, 415], [1039, 413], [1073, 406], [1156, 405], [1189, 403], [1214, 402], [1331, 401]];
    const barWidth = 706 / 85;
    let bars = '';
    for (let i = 0; i < 85; i++) {
        const x = 624 + i * barWidth;
        const top = steps.find(s => x + 1 < s[0])[1];
        bars += `<rect x="${x.toFixed(2)}" y="${top}" width="${(barWidth - 0.5).toFixed(2)}" height="${519 - top}" fill="#bdbdbd"/>`;
    }
    document.getElementById('chartBars').innerHTML = bars;
</script>
</body>
</html>
